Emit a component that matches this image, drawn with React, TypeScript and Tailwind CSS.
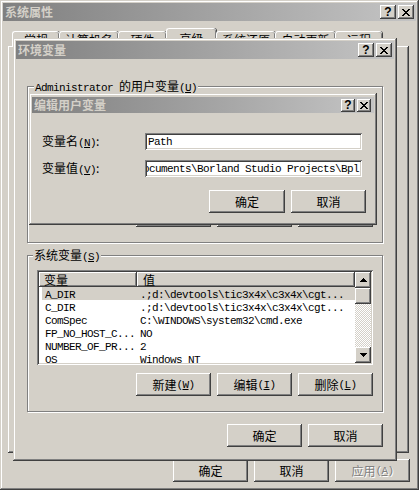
import React from "react";

const RAISED_WIN =
  "shadow-[inset_-1px_-1px_#404040,inset_1px_1px_#d4d0c8,inset_-2px_-2px_#808080,inset_2px_2px_#ffffff]";
const BTN =
  "shadow-[inset_-1px_-1px_#404040,inset_1px_1px_#ffffff,inset_-2px_-2px_#808080,inset_2px_2px_#d4d0c8]";
const SUNKEN =
  "shadow-[inset_1px_1px_#808080,inset_-1px_-1px_#ffffff,inset_2px_2px_#404040,inset_-2px_-2px_#d4d0c8]";

function L({ children, u }: { children?: React.ReactNode; u?: boolean }) {
  return (
    <span
      className={
        u
          ? "font-['Liberation_Mono',monospace] text-[11px] tracking-[-0.6px] underline underline-offset-[1px]"
          : "font-['Liberation_Mono',monospace] text-[11px] tracking-[-0.6px]"
      }
    >
      {children}
    </span>
  );
}

function Acc({ k }: { k: string }) {
  return (
    <>
      <L>(</L>
      <L u>{k}</L>
      <L>)</L>
    </>
  );
}

function CapBtn({ kind, small }: { kind: "help" | "close"; small?: boolean }) {
  return (
    <div
      className={
        (small ? "w-[14px] h-[13px] " : "w-[16px] h-[14px] ") +
        "flex items-center justify-center bg-[#d4d0c8] " +
        BTN
      }
    >
      {kind === "help" ? (
        <span className="font-['Liberation_Sans',sans-serif] font-bold text-[12px] leading-[12px] text-black -mt-[1px]">
          ?
        </span>
      ) : (
        <svg width="8" height="7" viewBox="0 0 8 7" shapeRendering="crispEdges">
          <path
            d="M0 0h2v1h1v1h2V1h1V0h2v1H7v1H6v1H5v1h1v1h1v1h1v1H6V6H5V5H3v1H2v1H0V6h1V5h1V4h1V3H2V2H1V1H0z"
            fill="#000"
          />
        </svg>
      )}
    </div>
  );
}

function TitleBar({ title, small }: { title: string; small?: boolean }) {
  return (
    <div
      className={
        (small ? "h-[16px] pr-[3px] " : "h-[18px] pr-[2px] ") +
        "flex items-center pl-[2px] bg-[linear-gradient(to_right,#808080,#c4c4c4)]"
      }
    >
      <span className="flex-1 font-bold text-[12px] leading-[14px] text-[#d4d0c8]">{title}</span>
      <CapBtn kind="help" small={small} />
      <div className="w-[2px]" />
      <CapBtn kind="close" small={small} />
    </div>
  );
}

function Button({
  children,
  w = "w-[75px]",
  disabled,
}: {
  children: React.ReactNode;
  w?: string;
  disabled?: boolean;
}) {
  return (
    <div
      className={
        w +
        " h-[23px] flex items-center justify-center bg-[#d4d0c8] " +
        BTN +
        (disabled ? " text-[#808080] [text-shadow:1px_1px_0_#ffffff]" : " text-black")
      }
    >
      {children}
    </div>
  );
}

function Group({
  label,
  children,
  labelLeft,
}: {
  label: React.ReactNode;
  children: React.ReactNode;
  labelLeft: string;
}) {
  return (
    <div className="relative h-[157px] border border-[#808080] shadow-[inset_1px_1px_#ffffff,1px_1px_#ffffff]">
      <div className={"absolute -top-[8px] px-[1px] bg-[#d4d0c8] leading-[14px] whitespace-nowrap " + labelLeft}>{label}</div>
      {children}
    </div>
  );
}

function Arrow({ up }: { up?: boolean }) {
  return (
    <svg width="7" height="4" viewBox="0 0 7 4" shapeRendering="crispEdges">
      {up ? <path d="M3 0h1v1h1v1h1v1h1v1H0V3h1V2h1V1h1z" fill="#000" /> : <path d="M0 0h7v1H6v1H5v1H4v1H3V3H2V2H1V1H0z" fill="#000" />}
    </svg>
  );
}

type Row = { name: string; value: string; sel?: boolean };

function ListView({ rows }: { rows: Row[] }) {
  return (
    <div className={"h-[95px] p-[2px] flex bg-white " + SUNKEN}>
      <div className="flex-1 flex flex-col overflow-hidden">
        <div className="h-[15px] flex shrink-0 bg-[#d4d0c8]">
          <div className="w-[98px] pl-[5px] flex items-center shadow-[inset_-1px_-1px_#404040,inset_1px_1px_#ffffff,inset_-2px_-2px_#808080]">
            变量
          </div>
          <div className="flex-1 pl-[6px] flex items-center shadow-[inset_-1px_-1px_#404040,inset_1px_1px_#ffffff,inset_-2px_-2px_#808080]">
            值
          </div>
        </div>
        {rows.map((r) => (
          <div
            key={r.name}
            className={
              r.sel
                ? "h-[13px] shrink-0 ml-[3px] flex items-center bg-[#d4d0c8]"
                : "h-[13px] shrink-0 ml-[3px] flex items-center"
            }
          >
            <div className="w-[95px] pl-[3px] whitespace-nowrap leading-[13px]">
              <L>{r.name}</L>
            </div>
            <div className="flex-1 pl-[3px] whitespace-nowrap leading-[13px]">
              <L>{r.value}</L>
            </div>
          </div>
        ))}
      </div>
      <div className="w-[16px] flex flex-col bg-[#d4d0c8]">
        <div className={"h-[16px] flex items-center justify-center " + BTN}>
          <Arrow up />
        </div>
        <div className={"h-[16px] " + BTN} />
        <div className="flex-1 bg-[repeating-conic-gradient(#ffffff_0%_25%,#d4d0c8_0%_50%)] bg-size-[2px_2px]" />
        <div className={"h-[16px] flex items-center justify-center " + BTN}>
          <Arrow />
        </div>
      </div>
    </div>
  );
}

const sysRows: Row[] = [
  { name: "A_DIR", value: ".;d:\\devtools\\tic3x4x\\c3x4x\\cgt...", sel: true },
  { name: "C_DIR", value: ".;d:\\devtools\\tic3x4x\\c3x4x\\cgt..." },
  { name: "ComSpec", value: "C:\\WINDOWS\\system32\\cmd.exe" },
  { name: "FP_NO_HOST_C...", value: "NO" },
  { name: "NUMBER_OF_PR...", value: "2" },
  { name: "OS", value: "Windows_NT" },
];

const userRows: Row[] = [
  { name: "PATH", value: "C:\\Documents and Settings\\Administrator", sel: true },
  { name: "TEMP", value: "C:\\Documents and Settings\\Administrator" },
  { name: "TMP", value: "C:\\Documents and Settings\\Administrator" },
];

function Tab({ label, w, selected }: { label: string; w: string; selected?: boolean }) {
  return (
    <div
      className={
        w +
        (selected
          ? " h-[19px] -mb-[1px] bg-[#d4d0c8] pt-[3px]"
          : " h-[15px] pt-[1px]") +
        " flex justify-center border-l border-t border-white rounded-t-[3px] shadow-[inset_-1px_0_#808080,1px_0_#404040]"
      }
    >
      {label}
    </div>
  );
}

export default function App() {
  return (
    <div className="relative w-[419px] h-[490px] overflow-hidden bg-[#d4d0c8] font-['Noto_Sans_CJK_SC',sans-serif] text-[12px] leading-[14px] text-black">
      {/* 系统属性 window */}
      <div className={"absolute inset-0 flex flex-col p-[3px] " + RAISED_WIN}>
        <TitleBar title="系统属性" />
        <div className="h-[25px] flex items-end pl-[9px]">
          <Tab label="常规" w="w-[47px]" />
          <Tab label="计算机名" w="w-[59px]" />
          <Tab label="硬件" w="w-[48px]" />
          <Tab label="高级" w="w-[50px]" selected />
          <Tab label="系统还原" w="w-[59px]" />
          <Tab label="自动更新" w="w-[60px]" />
          <Tab label="远程" w="w-[47px]" />
        </div>
        <div className={"ml-[5px] mr-[7px] h-[407px] " + BTN} />
        <div className="flex justify-end gap-[6px] mr-[6px] mt-[6px]">
          <Button>确定</Button>
          <Button>取消</Button>
          <Button disabled>
            应用<Acc k="A" />
          </Button>
        </div>
      </div>

      {/* 环境变量 window */}
      <div className={"absolute left-[13px] top-[38px] w-[384px] h-[423px] flex flex-col p-[3px] bg-[#d4d0c8] " + RAISED_WIN}>
        <TitleBar title="环境变量" />
        <div className="relative flex-1 flex flex-col px-[11px] pt-[27px]">
          <Group
            labelLeft="left-[6px]"
            label={
              <>
                <L>Administrator </L>的用户变量<Acc k="U" />
              </>
            }
          >
            <div className="pt-[14px] px-[9px] flex flex-col">
              <ListView rows={userRows} />
              <div className="flex justify-end gap-[6px] mt-[8px]">
                <Button>
                  新建<Acc k="N" />
                </Button>
                <Button>
                  编辑<Acc k="E" />
                </Button>
                <Button>
                  删除<Acc k="D" />
                </Button>
              </div>
            </div>
          </Group>
          <div className="h-[12px]" />
          <Group
            labelLeft="left-[5px]"
            label={
              <>
                系统变量<Acc k="S" />
              </>
            }
          >
            <div className="pt-[14px] px-[9px] flex flex-col">
              <ListView rows={sysRows} />
              <div className="flex justify-end gap-[6px] mt-[8px]">
                <Button>
                  新建<Acc k="W" />
                </Button>
                <Button>
                  编辑<Acc k="I" />
                </Button>
                <Button>
                  删除<Acc k="L" />
                </Button>
              </div>
            </div>
          </Group>
          <div className="flex justify-end gap-[6px] mt-[12px]">
            <Button>确定</Button>
            <Button>取消</Button>
          </div>

          {/* 编辑用户变量 dialog */}
          <div className={"absolute left-[13px] top-[34px] w-[348px] h-[132px] flex flex-col px-[3px] pt-[4px] bg-[#d4d0c8] " + RAISED_WIN}>
            <TitleBar title="编辑用户变量" small />
            <div className="flex items-center h-[17px] mt-[20px] pl-[10px]">
              <div className="w-[103px] whitespace-nowrap">
                变量名<Acc k="N" />:
              </div>
              <div className={"w-[217px] h-[17px] bg-white px-[3px] flex items-center " + SUNKEN}>
                <L>Path</L>
              </div>
            </div>
            <div className="flex items-center h-[17px] mt-[10px] pl-[10px]">
              <div className="w-[103px] whitespace-nowrap">
                变量值<Acc k="V" />:
              </div>
              <div className={"w-[217px] h-[17px] bg-white p-[2px] " + SUNKEN}>
                <div className="h-full overflow-hidden flex items-center justify-end pr-[1px] whitespace-nowrap">
                  <L>Documents\Borland Studio Projects\Bpl</L>
                </div>
              </div>
            </div>
            <div className="flex justify-end gap-[6px] mt-[13px] pr-[8px]">
              <Button w="w-[76px]">确定</Button>
              <Button>取消</Button>
            </div>
          </div>
        </div>
      </div>
    </div>
  );
}
